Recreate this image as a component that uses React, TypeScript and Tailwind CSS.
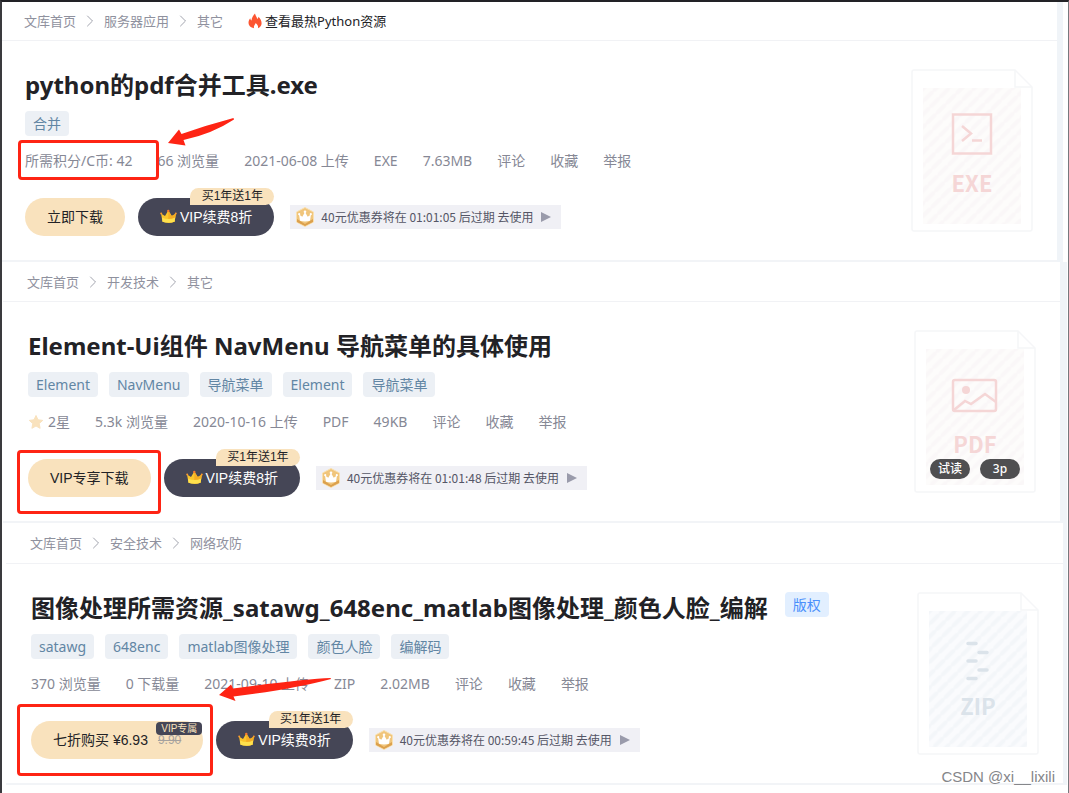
import type { ReactNode } from 'react'
import clsx from 'clsx'
import { ChevronRight } from 'lucide-react'

type FileKind = 'EXE' | 'PDF' | 'ZIP'

interface Resource {
    crumbs: string[]
    hotLink?: string
    title: string
    badge?: string
    tags: string[]
    stars?: string
    meta: string[]
    countdown: string
    kind: FileKind
    preview?: string[]
}

const resources: Resource[] = [
    {
        crumbs: ['文库首页', '服务器应用', '其它'],
        hotLink: '查看最热Python资源',
        title: 'python的pdf合并工具.exe',
        tags: ['合并'],
        meta: ['所需积分/C币: 42', '66 浏览量', '2021-06-08 上传', 'EXE', '7.63MB'],
        countdown: '01:01:05',
        kind: 'EXE',
    },
    {
        crumbs: ['文库首页', '开发技术', '其它'],
        title: 'Element-Ui组件 NavMenu 导航菜单的具体使用',
        tags: ['Element', 'NavMenu', '导航菜单', 'Element', '导航菜单'],
        stars: '2星',
        meta: ['5.3k 浏览量', '2020-10-16 上传', 'PDF', '49KB'],
        countdown: '01:01:48',
        kind: 'PDF',
        preview: ['试读', '3p'],
    },
    {
        crumbs: ['文库首页', '安全技术', '网络攻防'],
        title: '图像处理所需资源_satawg_648enc_matlab图像处理_颜色人脸_编解',
        badge: '版权',
        tags: ['satawg', '648enc', 'matlab图像处理', '颜色人脸', '编解码'],
        meta: ['370 浏览量', '0 下载量', '2021-09-10 上传', 'ZIP', '2.02MB'],
        countdown: '00:59:45',
        kind: 'ZIP',
    },
]

const actions = ['评论', '收藏', '举报']

function FlameIcon() {
    return (
        <svg width="14" height="16" viewBox="0 0 14 16" fill="#fc5531" aria-hidden="true">
            <path d="M7 .5c.4 2 1.800 3.400 2.300 5.600.7-.5 1.100-1.300 1.200-2.300 1.900 1.800 3.100 4.200 3.100 6.400 0 2.300-1.500 4.100-3.700 5 .7-2-.4-3.500-2.300-5.200-.3 1.400-1.100 1.800-1.500 2.900-.3.800-.3 1.600 0 2.300C2.700 14.500.5 12.600.5 9.900c0-1.900.8-3.400 1.700-4.600.2 1.100.6 1.800 1.300 2.300C3.700 4.700 5.200 2.600 7 .5z" />
        </svg>
    )
}

function CrownIcon() {
    return (
        <svg width="17" height="16" viewBox="0 0 17 16" aria-hidden="true">
            <path d="M1 4.500 5 7 8.300 1.500 11.800 7l4.200-2.500-1.500 8.300q-6 2-12 0z" fill="#fbc52c" />
            <path d="M8.300 1.500 11.800 7l4.200-2.500-1.500 8.300q-3 1-6.200 1z" fill="#f5ad23" />
            <path d="M2 8.500q6.500 3 13.200 0l-.7 4.300q-6 2-12 0z" fill="#ffe14d" />
            <circle cx="8.300" cy="1.900" r="1.200" fill="#fb7a2c" />
            <circle cx="1.200" cy="4.600" r="1" fill="#fb9a2c" />
            <circle cx="15.800" cy="4.600" r="1" fill="#fb9a2c" />
        </svg>
    )
}

function CouponIcon() {
    return (
        <svg width="20" height="20" viewBox="0 0 20 20" aria-hidden="true">
            <path d="M10 .5 18.500 5v10L10 19.500 1.500 15V5z" fill="#f0c57b" stroke="#f9e0b0" />
            <path d="M2 12v3l8 4 8-4v-3l-8 5z" fill="#dba04e" />
            <path d="M4 7.500 7.300 9.700 10 5l2.700 4.700L16 7.500l-1 6.300q-5 1.300-10 0z" fill="#fff" />
            <circle cx="10" cy="4.800" r="1.300" fill="#fff" />
            <circle cx="4.200" cy="7.200" r="1.100" fill="#fff" />
            <circle cx="15.800" cy="7.200" r="1.100" fill="#fff" />
        </svg>
    )
}

function StarIcon() {
    return (
        <svg width="16" height="16" viewBox="0 0 16 16" fill="#f9e2bd" stroke="#f9e2bd" strokeLinejoin="round" aria-hidden="true">
            <path d="m8 1.500 2 4.300 4.700.6-3.500 3.200.9 4.700L8 12l-4.100 2.300.9-4.700L1.300 6.400 6 5.800z" />
        </svg>
    )
}

function FileCard({ kind, preview }: { kind: FileKind; preview?: string[] }) {
    const blue = kind === 'ZIP'
    const ink = blue ? '#dbe3ea' : '#f5d6d6'
    return (
        <div className="relative shrink-0 self-start">
            <svg width="122" height="163" viewBox="0 0 122 163" fill="none" role="img" aria-label={`${kind} file`}>
                <defs>
                    <pattern id={`stripe-${kind}`} width="14" height="9" patternUnits="userSpaceOnUse" patternTransform="rotate(-45)">
                        <path d="M2 4.500h10" stroke={blue ? '#f3f6f9' : '#faf7f8'} strokeWidth="4" strokeLinecap="round" />
                    </pattern>
                </defs>
                <path d="M3 1h101l17 17v142q0 2-2 2H3q-2 0-2-2V3q0-2 2-2z" stroke="#f5f6f8" strokeWidth="1.500" />
                <path d="M104 1v17h17" stroke="#f5f6f8" strokeWidth="1.500" />
                <path d="M12 19h98v136H12z" fill={blue ? '#fafbfd' : '#fdfcfb'} />
                <path d="M12 19h98v136H12z" fill={`url(#stripe-${kind})`} />
                {kind === 'EXE' && (
                    <g stroke={ink} strokeWidth="2.500">
                        <path d="M42 45.500h38v39H42z" />
                        <path d="m51 57 9 7.500-9 7.500M61 71.500h10" />
                    </g>
                )}
                {kind === 'PDF' && (
                    <g stroke={ink} strokeWidth="2.500">
                        <rect x="39" y="50" width="43" height="31" rx="2" />
                        <circle cx="52" cy="60" r="4" fill={ink} stroke="none" />
                        <path d="m40 80 11-9 6 3 14-10 11 8" />
                    </g>
                )}
                {kind === 'ZIP' && (
                    <path d="M51 51.500h8M62 60.500h8M51 69h8M62 78h8M51 86.500h8" stroke={ink} strokeWidth="3.500" strokeLinecap="round" />
                )}
                <text x="61" y="123" textAnchor="middle" fill={ink} className="font-['Noto_Sans_CJK_SC',sans-serif] text-[22px] font-bold">
                    {kind}
                </text>
            </svg>
            {preview && (
                <div className="absolute inset-x-4 bottom-3.5 flex justify-between">
                    {preview.map((label) => (
                        <button key={label} type="button" className="h-5 w-10 rounded-full bg-[#4f4f51] text-xs leading-5 font-medium text-white">
                            {label}
                        </button>
                    ))}
                </div>
            )}
        </div>
    )
}

function MainButton({ kind }: { kind: FileKind }) {
    return (
        <button
            type="button"
            className="relative flex h-[38px] items-center gap-2.5 rounded-full bg-[#f9e2bd] px-[22px] text-sm text-[#222226]"
        >
            {kind === 'EXE' && '立即下载'}
            {kind === 'PDF' && 'VIP专享下载'}
            {kind === 'ZIP' && (
                <>
                    七折购买 ¥6.93
                    <del className="text-xs text-[#a5a19e]">9.90</del>
                    <span className="absolute top-px right-px h-[13px] w-[46px] rounded-sm bg-[#454656] text-[10px] leading-[13px] text-[#f9e2bd]">
                        VIP专属
                    </span>
                </>
            )}
        </button>
    )
}

// hand-drawn red marks over a section
function Arrow({ className, width, height, d }: { className: string; width: number; height: number; d: string }) {
    return (
        <svg className={clsx('pointer-events-none absolute', className)} width={width} height={height} fill="#fe2414" aria-hidden="true">
            <path d={d} />
        </svg>
    )
}

function RedBox({ className }: { className: string }) {
    return <div className={clsx('pointer-events-none absolute rounded-[4px] border-3 border-[#fe2414]', className)} />
}

interface SectionProps {
    data: Resource
    className: string
    crumbClass: string
    bodyClass: string
    children: ReactNode
}

function ResourceSection({ data, className, crumbClass, bodyClass, children }: SectionProps) {
    return (
        <section className={clsx('relative border-[#f0f4f8] bg-white', className)}>
            <nav className={clsx('flex items-center gap-[11px] border-b border-[#f1f2f5] text-[13px] leading-5 text-[#8f919e]', crumbClass)}>
                {data.crumbs.map((crumb, i) => (
                    <div key={crumb} className="flex items-center gap-[11px]">
                        {i > 0 && <ChevronRight className="-mx-[7px] size-5" strokeWidth={1} />}
                        <a href="#">{crumb}</a>
                    </div>
                ))}
                {data.hotLink && (
                    <a href="#" className="ml-3.5 flex items-center gap-[3px] text-[#222226]">
                        <FlameIcon />
                        {data.hotLink}
                    </a>
                )}
            </nav>

            <div className={clsx('flex justify-between border-b-2 border-[#f2f4f7] pt-7 pr-6', bodyClass)}>
                <div>
                    <div className="flex items-start gap-[17px]">
                        <h1 className="text-2xl leading-8 font-bold text-[#222226]">{data.title}</h1>
                        {data.badge && (
                            <span className="rounded-sm bg-[#e2efff] px-2 text-sm leading-[25px] text-[#4a8ffb]">{data.badge}</span>
                        )}
                    </div>
                    <div className="mt-2.5 flex gap-[11px]">
                        {data.tags.map((tag, i) => (
                            <a key={i} href="#" className="rounded-sm bg-[#ecf0f5] px-2 text-sm leading-[25px] text-[#6286a4]">
                                {tag}
                            </a>
                        ))}
                    </div>
                    <div className="mt-[15px] flex gap-[25px] text-sm leading-5 text-[#868895]">
                        {data.stars && (
                            <span className="flex items-center gap-1">
                                <StarIcon />
                                {data.stars}
                            </span>
                        )}
                        {data.meta.map((item) => (
                            <span key={item}>{item}</span>
                        ))}
                        {actions.map((action) => (
                            <a key={action} href="#">{action}</a>
                        ))}
                    </div>
                    <div className="mt-[27px] mb-6 flex items-center font-['Liberation_Sans','Noto_Sans_CJK_SC',sans-serif]">
                        <MainButton kind={data.kind} />
                        <button
                            type="button"
                            className="relative ml-[13px] flex h-[38px] items-center gap-[3px] rounded-full bg-[#454656] px-[22px] text-sm text-white"
                        >
                            <CrownIcon />
                            VIP续费8折
                            <span className="absolute -top-2.5 right-0 h-[17px] w-[84px] rounded-full rounded-bl-none bg-[#f9e2bd] text-xs leading-[17px] text-[#222226]">
                                买1年送1年
                            </span>
                        </button>
                        <a
                            href="#"
                            className="ml-4 flex h-6 items-center bg-[#f0f0f5] pr-2.5 pl-[5px] font-['Noto_Sans_CJK_SC',sans-serif] text-xs text-[#555666]"
                        >
                            <CouponIcon />
                            <span className="mr-2 ml-1.5">40元优惠券将在 {data.countdown} 后过期 去使用</span>
                            <svg width="10" height="12" fill="#9a9bab" aria-hidden="true">
                                <path d="M0 1v10l10-5z" />
                            </svg>
                        </a>
                    </div>
                </div>
                <FileCard kind={data.kind} preview={data.preview} />
            </div>
            {children}
        </section>
    )
}

export default function App() {
    return (
        <div className="relative min-h-screen border-t-2 border-r border-l-2 border-t-[#222226] border-r-[#77797e] border-l-[#3a3a3e] bg-white font-['Noto_Sans','Noto_Sans_CJK_SC',sans-serif]">
            <ResourceSection data={resources[0]} className="mr-[5px] border-r-6" crumbClass="h-[39px] pl-[22px]" bodyClass="pl-[23px]">
                <RedBox className="top-[138px] left-4 h-10 w-[141px]" />
                <Arrow
                    className="top-[116px] left-[165px]"
                    width={68}
                    height={28}
                    d="M66.500 0 1 25l17.500 2.500-2-5.500Q45 16 67 1.500z M1 25 12 11.500l2.500 4.500Q40 7 66.500 0z"
                />
            </ResourceSection>
            <ResourceSection data={resources[1]} className="mr-px ml-px border-r-7" crumbClass="h-10 pl-6" bodyClass="pl-[25px]">
                <RedBox className="top-[188px] left-3.5 h-16 w-36" />
            </ResourceSection>
            <ResourceSection data={resources[2]} className="mr-px ml-1 border-r-4" crumbClass="h-[41px] pl-6" bodyClass="pl-[25px]">
                <RedBox className="top-[181px] left-[11px] h-[72px] w-[196px]" />
                <Arrow
                    className="top-[154px] left-[213px]"
                    width={113}
                    height={28}
                    d="M111.500 1Q85 2 14 11.500L12 7.500 0 18l16.500 6-2-4.500Q75 12 112 2z"
                />
            </ResourceSection>
            <p className="absolute right-[13px] bottom-1.5 font-['Liberation_Sans',sans-serif] text-[15px] leading-5 text-[#85868a]">
                CSDN @xi__lixili
            </p>
        </div>
    )
}
